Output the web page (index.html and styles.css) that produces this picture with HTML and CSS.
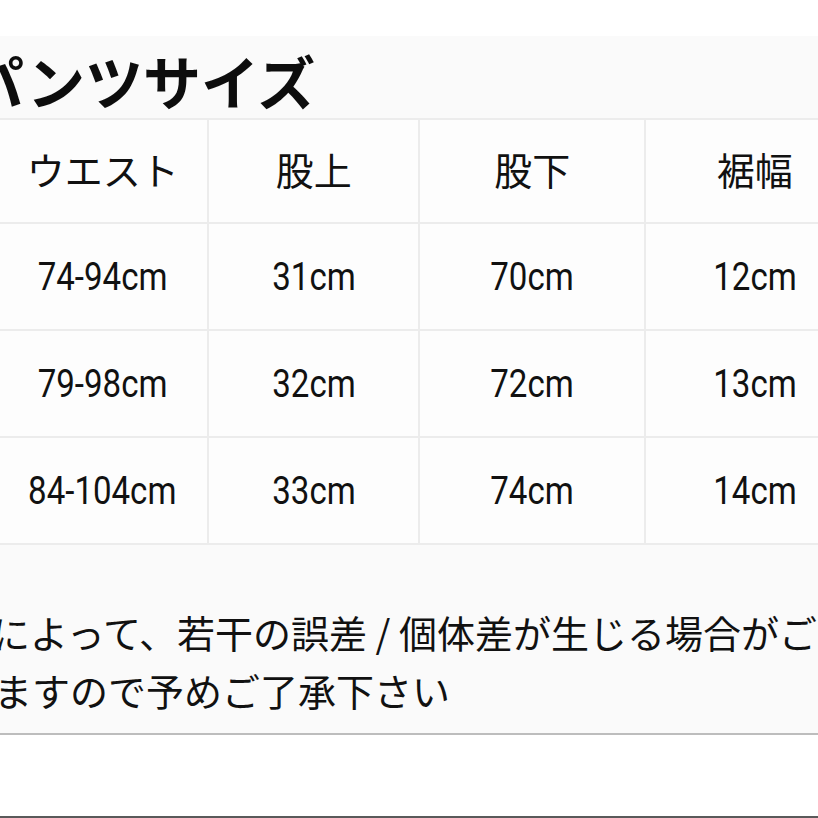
FILE: index.html
```html
<!DOCTYPE html>
<html lang="ja">
<head>
<meta charset="utf-8">
<title>パンツサイズ</title>
<link rel="stylesheet" href="styles.css">
</head>
<body>
<div class="page">
  <section class="panel">
    <h1 class="title">パンツサイズ</h1>
    <table class="size-table">
      <colgroup>
        <col class="col-1"><col class="col-2"><col class="col-3"><col class="col-4">
      </colgroup>
      <thead>
        <tr class="head-row">
          <th>ウエスト</th><th>股上</th><th>股下</th><th>裾幅</th>
        </tr>
      </thead>
      <tbody>
        <tr class="data-row">
          <td><span class="num">74-94cm</span></td><td><span class="num">31cm</span></td><td><span class="num">70cm</span></td><td><span class="num">12cm</span></td>
        </tr>
        <tr class="data-row">
          <td><span class="num">79-98cm</span></td><td><span class="num">32cm</span></td><td><span class="num">72cm</span></td><td><span class="num">13cm</span></td>
        </tr>
        <tr class="data-row">
          <td><span class="num">84-104cm</span></td><td><span class="num">33cm</span></td><td><span class="num">74cm</span></td><td><span class="num">14cm</span></td>
        </tr>
      </tbody>
    </table>
    <p class="note">
      <span class="line line-1">測定方法によって、若干の誤差 / 個体差が生じる場合がござい</span>
      <span class="line line-2">ますので予めご了承下さい</span>
    </p>
  </section>
  <div class="spacer"></div>
</div>
</body>
</html>
```

FILE: styles.css
```css
html, body {
  margin: 0;
  padding: 0;
  background: #ffffff;
  overflow: hidden;
}

.page {
  width: 818px;
  height: 818px;
  overflow: hidden;
  display: flex;
  flex-direction: column;
  font-family: "Noto Sans CJK JP", "Noto Sans", sans-serif;
  color: #111111;
}

.panel {
  margin-top: 36px;
  background: #fafafa;
  border-bottom: 2px solid #bdbdbd;
  padding-bottom: 14px;
  overflow: hidden;
}

.title {
  margin: 15px 0 9px -34px;
  font-size: 58px;
  line-height: 58px;
  font-weight: 700;
  white-space: nowrap;
  color: #0d0d0d;
}

.size-table {
  margin-left: -4px;
  border-collapse: separate;
  border-spacing: 2px;
  background: #ececec;
  table-layout: fixed;
  width: 869px;
}

.col-1 { width: 209px; }
.col-2 { width: 208px; }
.col-3 { width: 224px; }
.col-4 { width: 216px; }

.size-table th,
.size-table td {
  background: #fdfdfd;
  padding: 0;
  text-align: center;
  vertical-align: middle;
  white-space: nowrap;
}

.head-row th {
  height: 102px;
  padding-bottom: 6px;
  box-sizing: border-box;
  font-size: 38px;
  font-weight: 400;
  color: #111111;
}

.data-row td {
  height: 105px;
}

.num {
  display: inline-block;
  font-family: Roboto, "Liberation Sans", sans-serif;
  font-size: 38px;
  line-height: 1;
  transform: scaleX(0.87);
  color: #111111;
}

.note {
  margin: 58px 0 0 0;
  font-size: 38px;
  line-height: 58px;
  white-space: nowrap;
}

.line {
  display: block;
}

.line-1 {
  margin-left: -160px;
}

.line-2 {
  margin-left: -6px;
}

.spacer {
  flex: 1;
  border-bottom: 2px solid #5a5a5a;
}
```
